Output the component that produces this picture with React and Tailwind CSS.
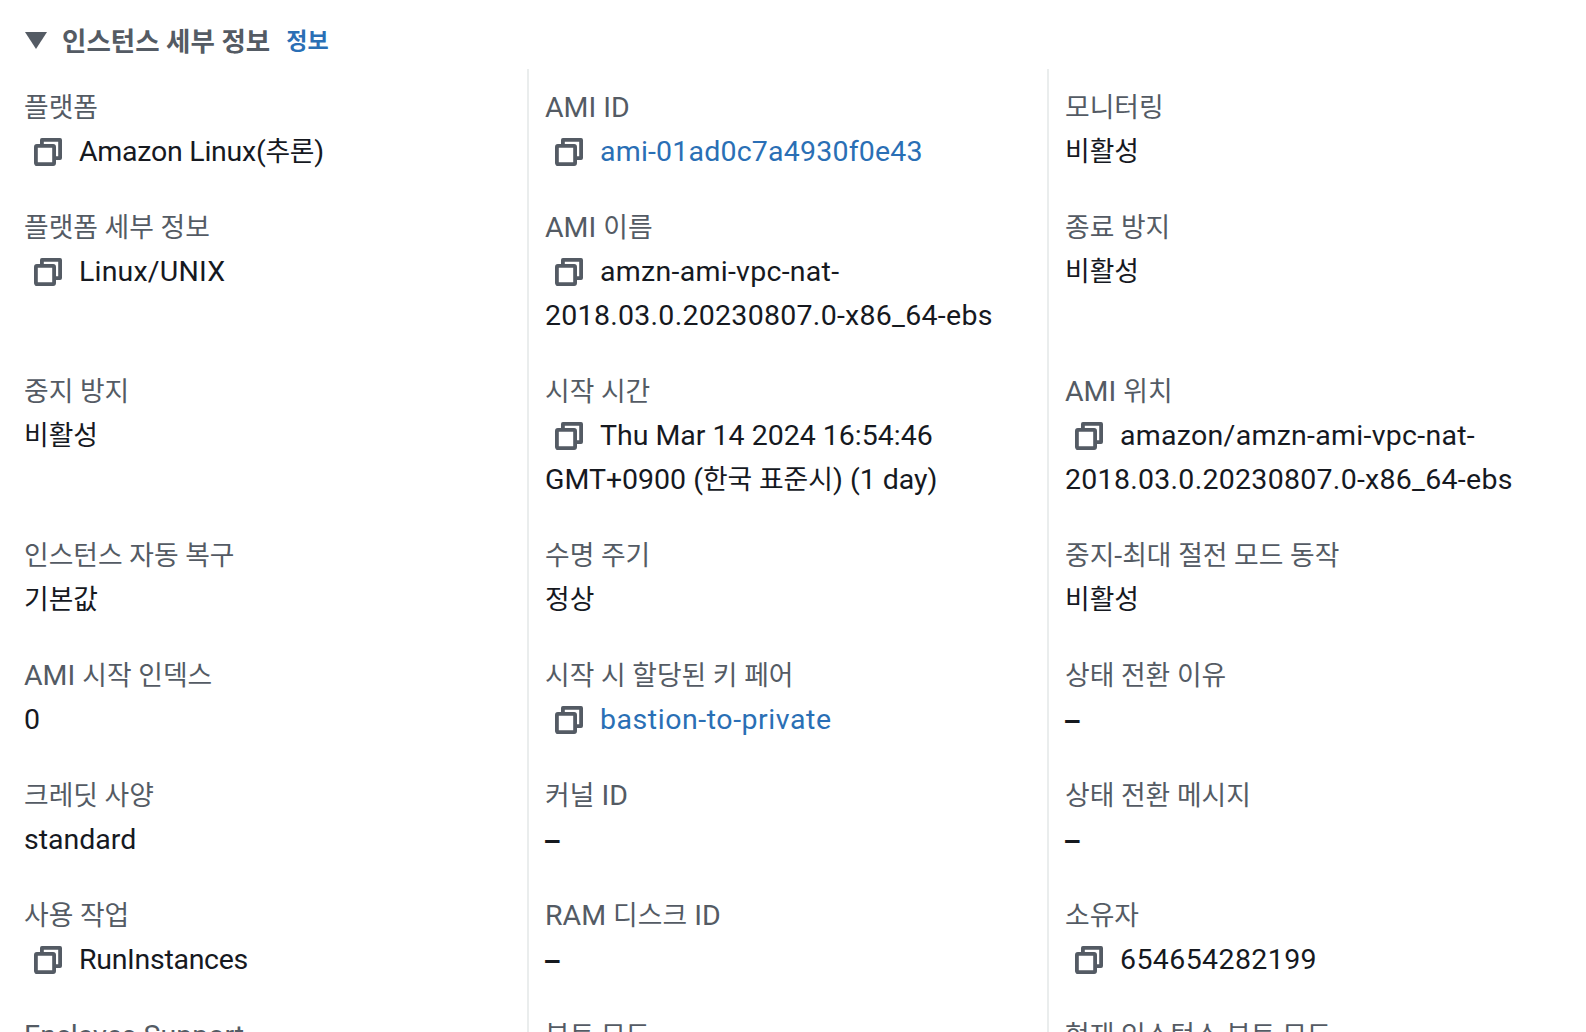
import React from "react";

const fontStack = "font-['Roboto','Noto_Sans_CJK_KR',sans-serif]";

// 한글은 영문보다 살짝 작게
function Ko({ text }) {
  return text.split(/([\uAC00-\uD7A3]+(?: [\uAC00-\uD7A3]+)*)/).map((part, i) =>
    i % 2 === 1 ? (
      <span key={i} className="text-[26.8px]">
        {part}
      </span>
    ) : (
      part
    )
  );
}

function CopyIcon() {
  return (
    <svg
      viewBox="0 0 28 28"
      className="inline-block w-7 h-7 ml-[10px] mr-[17px] align-[-5px] text-[#545b64]"
      fill="none"
      stroke="currentColor"
      strokeWidth="3.8"
      strokeLinejoin="round"
    >
      <rect x="1.9" y="7.9" width="18.2" height="18.2" rx="1" />
      <path d="M7.9 7V1.9h18.2V20.1H21" />
    </svg>
  );
}

function Field({ label, value, copy, link, track }) {
  return (
    <div>
      <div className="text-[#545b64]">
        <Ko text={label} />
      </div>
      <div className={`${link ? "text-[#2a6fb5]" : "text-[#16191f]"} ${track || ""}`}>
        {copy && <CopyIcon />}
        {value === "–" ? (
          <span className="-ml-[2px] font-bold leading-none align-[-2px]">–</span>
        ) : (
          <Ko text={value} />
        )}
      </div>
    </div>
  );
}

const rows = [
  [
    { label: "플랫폼", value: "Amazon Linux(추론)", copy: true, track: "tracking-[-0.25px]" },
    { label: "AMI ID", value: "ami-01ad0c7a4930f0e43", copy: true, link: true, track: "tracking-[0.2px]" },
    { label: "모니터링", value: "비활성" },
  ],
  [
    { label: "플랫폼 세부 정보", value: "Linux/UNIX", copy: true, track: "tracking-[0.2px]" },
    { label: "AMI 이름", value: "amzn-ami-vpc-nat-2018.03.0.20230807.0-x86_64-ebs", copy: true, track: "tracking-[0.28px]" },
    { label: "종료 방지", value: "비활성" },
  ],
  [
    { label: "중지 방지", value: "비활성" },
    { label: "시작 시간", value: "Thu Mar 14 2024 16:54:46 GMT+0900 (한국 표준시) (1 day)", copy: true },
    { label: "AMI 위치", value: "amazon/amzn-ami-vpc-nat-2018.03.0.20230807.0-x86_64-ebs", copy: true, track: "tracking-[0.28px]" },
  ],
  [
    { label: "인스턴스 자동 복구", value: "기본값" },
    { label: "수명 주기", value: "정상" },
    { label: "중지-최대 절전 모드 동작", value: "비활성" },
  ],
  [
    { label: "AMI 시작 인덱스", value: "0" },
    { label: "시작 시 할당된 키 페어", value: "bastion-to-private", copy: true, link: true, track: "tracking-[0.55px]" },
    { label: "상태 전환 이유", value: "–" },
  ],
  [
    { label: "크레딧 사양", value: "standard" },
    { label: "커널 ID", value: "–" },
    { label: "상태 전환 메시지", value: "–" },
  ],
  [
    { label: "사용 작업", value: "RunInstances", copy: true, track: "tracking-[-0.3px]" },
    { label: "RAM 디스크 ID", value: "–" },
    { label: "소유자", value: "654654282199", copy: true, track: "tracking-[0.4px]" },
  ],
  [
    { label: "Enclaves Support", value: "–" },
    { label: "부트 모드", value: "–" },
    { label: "현재 인스턴스 부트 모드", value: "–" },
  ],
];

export default function App() {
  return (
    <div className={`h-[1032px] overflow-hidden bg-white text-[28.5px] leading-[44px] ${fontStack}`}>
      <div className="flex items-center h-[69px] pl-[25px] pt-[14px]">
        <svg viewBox="0 0 22 17" className="w-[22px] h-[17px] mb-[2px] mr-[15px] text-[#545b64]" fill="currentColor">
          <path d="M0 0h22L11 17z" />
        </svg>
        <span className="text-[26.5px] font-bold text-[#545b64]">인스턴스 세부 정보</span>
        <span className="ml-4 text-[23px] font-bold text-[#2a6fb5]">정보</span>
      </div>
      <div className="grid grid-cols-[519px_520px_1fr] ml-2">
        {rows.map((row) =>
          row.map((cell, i) => (
            <div key={cell.label} className={`px-4 pt-[17px] pb-[15px] ${i > 0 ? "border-l-2 border-[#eaeded]" : ""}`}>
              <Field {...cell} />
            </div>
          ))
        )}
      </div>
    </div>
  );
}
